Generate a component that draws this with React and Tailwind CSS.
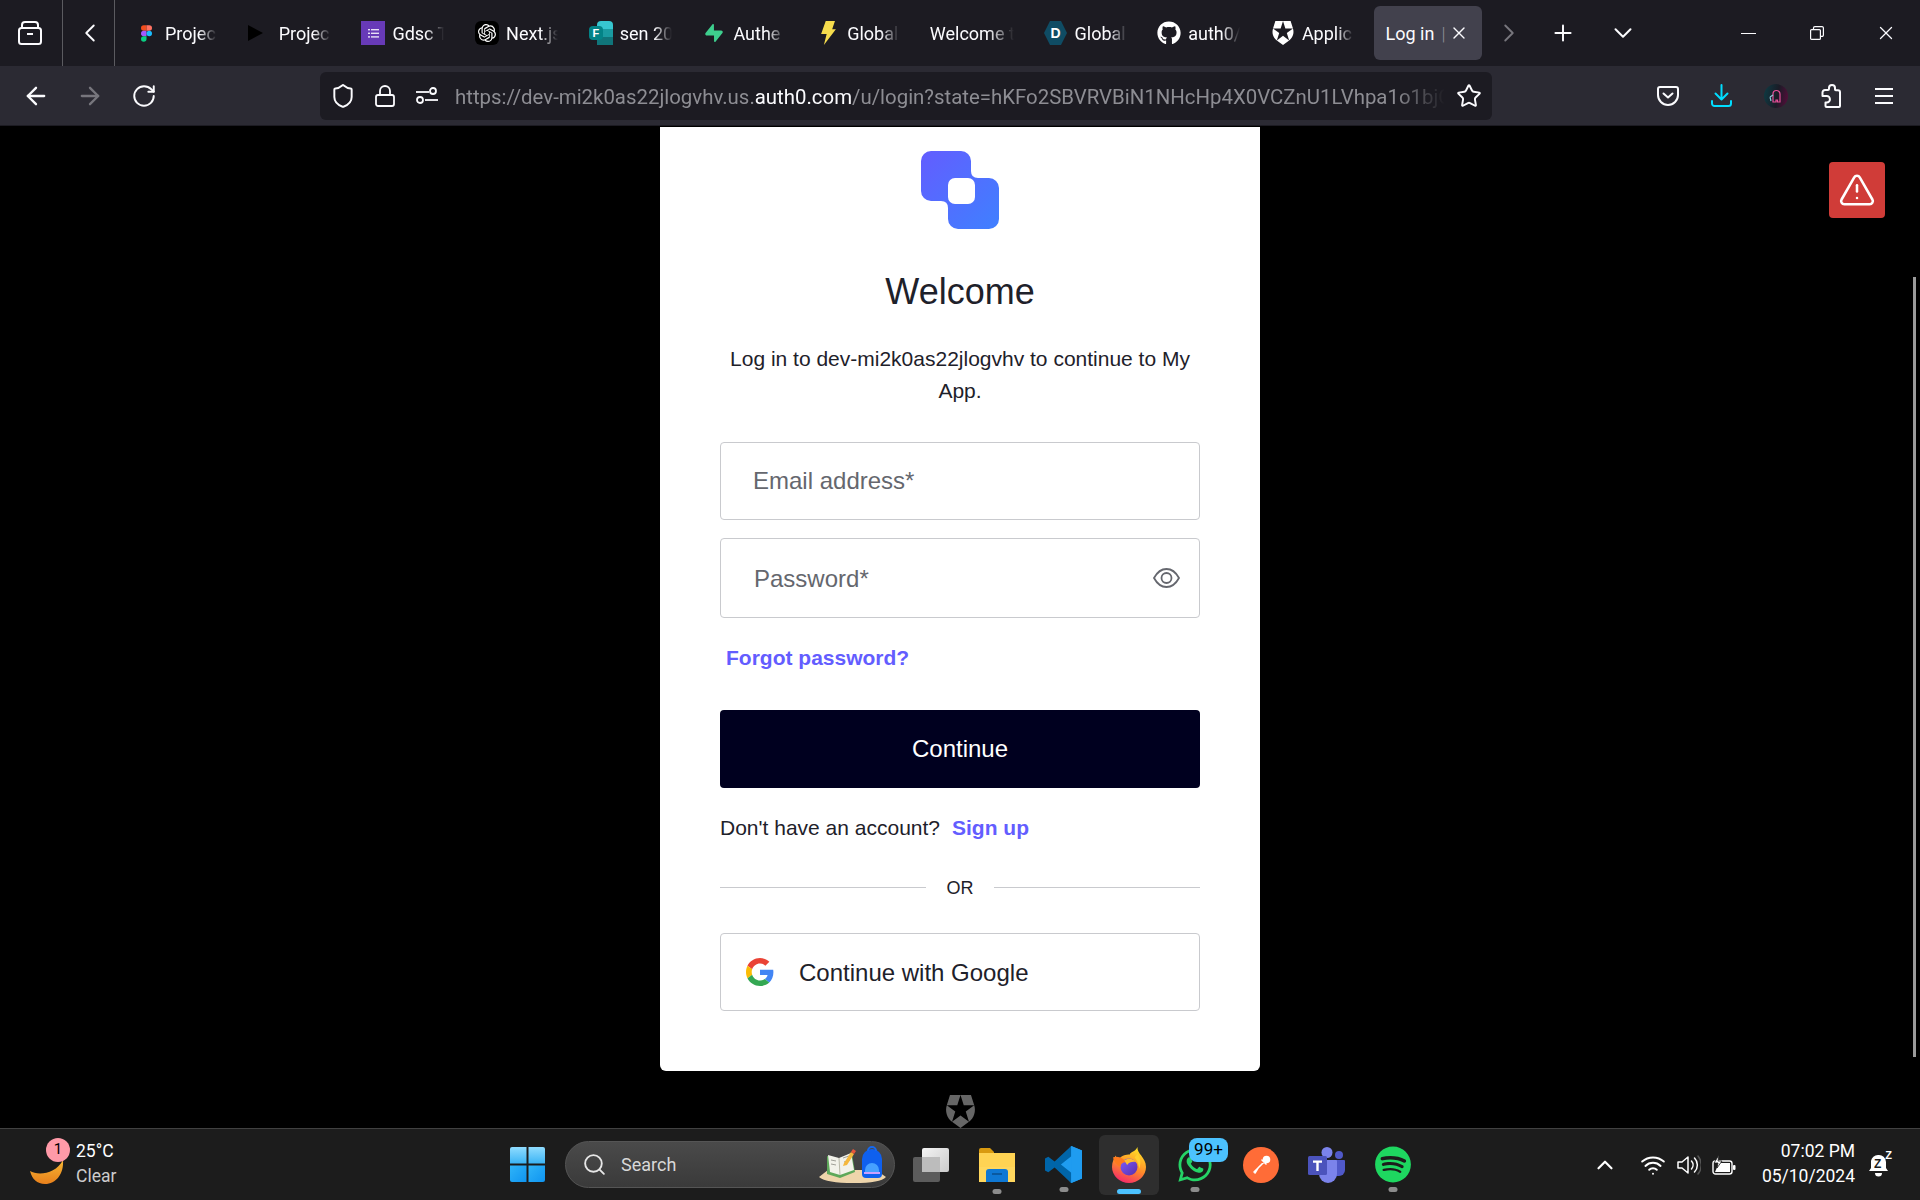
import React from "react";
import { ArrowLeft, ArrowRight, RotateCw, Shield, Lock, Star, X, Plus, ChevronDown, ChevronRight, ChevronLeft, ChevronUp, TriangleAlert, Search, Wifi } from "lucide-react";
import { FaGithub, FaWhatsapp, FaSpotify } from "react-icons/fa";
import { SiOpenai, SiAuth0, SiSupabase } from "react-icons/si";

const Figma = () => (
  <svg width="11" height="17" viewBox="0 0 14 21">
    <path d="M0 3.5A3.5 3.5 0 0 1 3.5 0H7v7H3.5A3.5 3.5 0 0 1 0 3.5z" fill="#f24e1e" />
    <path d="M7 0h3.5a3.5 3.5 0 1 1 0 7H7z" fill="#ff7262" />
    <path d="M0 10.5A3.5 3.5 0 0 1 3.5 7H7v7H3.5A3.5 3.5 0 0 1 0 10.5z" fill="#a259ff" />
    <circle cx="10.5" cy="10.5" r="3.5" fill="#1abcfe" />
    <path d="M0 17.5A3.5 3.5 0 0 1 3.5 14H7v3.5a3.5 3.5 0 1 1-7 0z" fill="#0acf83" />
  </svg>
);
const Play = () => (
  <svg className="mr-[9px]" width="15" height="16" viewBox="0 0 15 16"><path d="M0 0l15 8L0 16z" fill="#000" /></svg>
);
const FormsIcon = () => (
  <div className="w-[24px] h-[24px] bg-[#673ab7] flex items-center justify-center">
    <svg width="11" height="9" viewBox="0 0 11 9" fill="#e8e0f5">
      <rect x="0" y="0" width="2" height="1.4" /><rect x="3" y="0" width="8" height="1.4" />
      <rect x="0" y="3.6" width="2" height="1.4" /><rect x="3" y="3.6" width="8" height="1.4" />
      <rect x="0" y="7.2" width="2" height="1.4" /><rect x="3" y="7.2" width="8" height="1.4" />
    </svg>
  </div>
);
const OpenAi = () => (
  <div className="w-[24px] h-[24px] rounded-md bg-black flex items-center justify-center text-white"><SiOpenai size={18} /></div>
);
const MsForms = () => (
  <div className="relative w-[24px] h-[24px]">
    <div className="absolute right-0 top-0 w-[16px] h-[24px] bg-[#37c6d0] rounded-sm" />
    <div className="absolute right-0 top-[8px] w-[16px] h-[8px] bg-[#1a9ba1]" />
    <div className="absolute right-0 top-[16px] w-[16px] h-[8px] bg-[#10757a]" />
    <div className="absolute left-0 top-[5px] w-[14px] h-[14px] rounded-sm bg-[#038387] flex items-center justify-center text-white text-[11px] font-bold leading-none [font-family:'Liberation_Sans',sans-serif]">F</div>
  </div>
);
const YellowBolt = () => (
  <svg width="15" height="24" viewBox="0 0 16 26"><path d="M5 0h10l-3 9h4L3 26l3-12H0z" fill="#f5dc4d" /></svg>
);
const DHex = () => (
  <div className="relative w-[23px] h-[24px] flex items-center justify-center">
    <svg className="absolute inset-0" width="23" height="24" viewBox="0 0 23 24"><path d="M6 0h11l6 12-6 12H6L0 12z" fill="#0f4c64" /></svg>
    <span className="relative text-white text-[14px] font-bold leading-none [font-family:'Liberation_Sans',sans-serif]">D</span>
  </div>
);

const tabs = [
  { icon: <Figma />, label: "Projec" },
  { icon: <Play />, label: "Projec" },
  { icon: <FormsIcon />, label: "Gdsc T" },
  { icon: <OpenAi />, label: "Next.js" },
  { icon: <MsForms />, label: "sen 20" },
  { icon: <SiSupabase size={18} color="#3ecf8e" />, label: "Authe" },
  { icon: <YellowBolt />, label: "Global" },
  { label: "Welcome t" },
  { icon: <DHex />, label: "Global" },
  { icon: <FaGithub size={24} color="#fff" />, label: "auth0/" },
  { icon: <SiAuth0 size={24} color="#fff" />, label: "Applic" },
];

function Tab({ icon, label }) {
  return (
    <div className="w-[108px] h-[54px] shrink-0 flex items-center pl-[11px] text-[18px] text-[#fbfbfe]">
      {icon && <div className="w-[24px] h-[24px] shrink-0 flex items-center justify-center mr-[7px]">{icon}</div>}
      <div className={`whitespace-nowrap ${icon ? "w-[56px] [mask-image:linear-gradient(to_right,black_34px,transparent_52px)]" : "w-[88px] [mask-image:linear-gradient(to_right,black_58px,transparent_84px)]"}`}>{label}</div>
    </div>
  );
}

const ArchiveIcon = () => (
  <svg width="24" height="24" viewBox="0 0 24 24" fill="none" stroke="#fbfbfe" strokeWidth="2" strokeLinejoin="round">
    <rect x="1" y="7" width="22" height="16" rx="2.5" />
    <path d="M4 7V4a3 3 0 0 1 3-3h10a3 3 0 0 1 3 3v3" />
    <path d="M9 13h6" />
  </svg>
);
const Tune = () => (
  <svg width="22" height="20" viewBox="0 0 22 20" fill="none" stroke="#fbfbfe" strokeWidth="1.8">
    <path d="M0 6h13" /><circle cx="17" cy="5" r="3" />
    <circle cx="4" cy="14" r="3" /><path d="M9 14h13" />
  </svg>
);
const Pocket = () => (
  <svg width="22" height="20" viewBox="0 0 22 20" fill="none" stroke="#fbfbfe" strokeWidth="2" strokeLinecap="round" strokeLinejoin="round">
    <path d="M3 1h16a2 2 0 0 1 2 2v6a10 10 0 0 1-20 0V3a2 2 0 0 1 2-2z" />
    <path d="M6.5 7.5L11 11.5l4.5-4" />
  </svg>
);
const Dl = () => (
  <svg width="21" height="23" viewBox="0 0 21 23" fill="none" stroke="#00ddff" strokeWidth="2" strokeLinecap="round" strokeLinejoin="round">
    <path d="M10.5 1v14M4.5 9.5l6 6 6-6" />
    <path d="M1 17v2.5a2.5 2.5 0 0 0 2.5 2.5h14a2.5 2.5 0 0 0 2.5-2.5V17" />
  </svg>
);
const Avatar = () => (
  <div className="w-[24px] h-[24px] rounded-full bg-[linear-gradient(100deg,#0d3c44,#1a1b26_55%,#5a0c3c)] flex items-center justify-center">
    <svg width="14" height="14" viewBox="0 0 14 14" fill="none" strokeWidth="1.2">
      <path d="M4 13V5a3.5 3.5 0 0 1 7 0v8H8.5v-2H7v2z" stroke="#e84f9a" />
      <path d="M1 8l3-2M1 8l1 4" stroke="#8ec7d8" />
    </svg>
  </div>
);
const PuzzleIcon = () => (
  <svg width="20" height="24" viewBox="0 0 20 24" fill="none" stroke="#fbfbfe" strokeWidth="2" strokeLinejoin="round">
    <path d="M8 5V4a3 3 0 0 1 6 0v1.5c0 .5.3.8.8.8H17a2 2 0 0 1 2 2V22a1 1 0 0 1-1 1H5.5a1 1 0 0 1-1-1v-3.5h1.2a3 3 0 0 0 0-6.5H1.5V8.5A2.5 2.5 0 0 1 4 6h3a1 1 0 0 0 1-1z" />
  </svg>
);
const Hamburger = () => (
  <svg width="18" height="16" viewBox="0 0 18 16" stroke="#fbfbfe" strokeWidth="2"><path d="M0 1h18M0 8h18M0 15h18" /></svg>
);
const Restore = () => (
  <svg width="14" height="14" viewBox="0 0 14 14" fill="none" stroke="#fbfbfe" strokeWidth="1.2">
    <rect x="0.6" y="3.6" width="9.8" height="9.8" rx="1" />
    <path d="M3.5 3.5V2a1.4 1.4 0 0 1 1.4-1.4h7A1.4 1.4 0 0 1 13.4 2v7a1.4 1.4 0 0 1-1.4 1.4h-1.5" />
  </svg>
);

const Logo = () => (
  <svg width="78" height="78" viewBox="0 0 78 78">
    <defs>
      <linearGradient id="lg" x1="0" y1="0" x2="1" y2="1">
        <stop offset="0" stopColor="#635dff" />
        <stop offset="1" stopColor="#3f80ff" />
      </linearGradient>
    </defs>
    <path fill="url(#lg)" d="M10 0H40a10 10 0 0 1 10 10V20Q50 27 57 27H68a10 10 0 0 1 10 10V68a10 10 0 0 1-10 10H37a10 10 0 0 1-10-10V57Q27 50 20 50H10a10 10 0 0 1-10-10V10a10 10 0 0 1 10-10z" />
    <rect x="27" y="27" width="27" height="26" rx="7" fill="#fff" />
  </svg>
);
const GoogleG = () => (
  <svg width="28" height="28" viewBox="0 0 48 48">
    <path fill="#EA4335" d="M24 9.5c3.54 0 6.71 1.22 9.21 3.6l6.85-6.85C35.9 2.38 30.47 0 24 0 14.62 0 6.51 5.38 2.56 13.22l7.98 6.19C12.43 13.72 17.74 9.5 24 9.5z" />
    <path fill="#4285F4" d="M46.98 24.55c0-1.57-.15-3.09-.38-4.55H24v9.02h12.94c-.58 2.96-2.26 5.48-4.78 7.18l7.73 6c4.51-4.18 7.09-10.36 7.09-17.65z" />
    <path fill="#FBBC05" d="M10.53 28.59c-.48-1.45-.76-2.99-.76-4.59s.27-3.14.76-4.59l-7.98-6.19C.92 16.46 0 20.12 0 24c0 3.88.92 7.54 2.56 10.78l7.97-6.19z" />
    <path fill="#34A853" d="M24 48c6.48 0 11.93-2.13 15.89-5.81l-7.73-6c-2.15 1.45-4.92 2.3-8.16 2.3-6.26 0-11.57-4.22-13.47-9.91l-7.98 6.19C6.51 42.62 14.62 48 24 48z" />
  </svg>
);
const EyeIcon = () => (
  <svg width="27" height="20" viewBox="0 0 27 20" fill="none" stroke="#65676e" strokeWidth="1.8">
    <path d="M1 10C4 4.5 8.5 1 13.5 1S23 4.5 26 10c-3 5.5-7.5 9-12.5 9S4 15.5 1 10z" />
    <circle cx="13.5" cy="10" r="5" />
  </svg>
);

const Moon = () => (
  <svg width="34" height="24" viewBox="0 0 34 24">
    <defs><linearGradient id="mn" x1="0" y1="0" x2="0" y2="1"><stop offset="0" stopColor="#f7b733" /><stop offset="1" stopColor="#e8801c" /></linearGradient></defs>
    <path d="M33 0c1 14-7 24-18 24C7 24 2 19 0 11c8 5 26 3 33-11z" fill="url(#mn)" />
  </svg>
);
const WinLogo = () => (
  <svg width="35" height="35" viewBox="0 0 35 35">
    <defs>
      <linearGradient id="w1" x1="0" y1="0" x2="0" y2="1"><stop offset="0" stopColor="#8fdcff" /><stop offset="1" stopColor="#3cb4f5" /></linearGradient>
      <linearGradient id="w2" x1="0" y1="0" x2="1" y2="1"><stop offset="0" stopColor="#2fb4f8" /><stop offset="1" stopColor="#0f94f0" /></linearGradient>
    </defs>
    <path d="M2 0h14.5v16.5H0V2a2 2 0 0 1 2-2z" fill="url(#w1)" />
    <path d="M18.5 0H33a2 2 0 0 1 2 2v14.5H18.5z" fill="url(#w1)" />
    <path d="M0 18.5h16.5V35H2a2 2 0 0 1-2-2z" fill="url(#w2)" />
    <path d="M18.5 18.5H35V33a2 2 0 0 1-2 2H18.5z" fill="url(#w2)" />
  </svg>
);
const SearchArt = () => (
  <svg width="67" height="40" viewBox="0 0 67 40">
    <path d="M9 25h48l10 7c-4 4-14 6-32 6C16 38 5 36 0 32z" fill="#eed5ab" />
    <path d="M8 11l12 3 13-5 3 18-15 6-13-4z" fill="#5ea85a" />
    <path d="M9 10l11 3 12-5 3 17-14 5-10-3z" fill="#f2f2ea" />
    <path d="M20 13l1 17" stroke="#b8b8a8" strokeWidth="1" />
    <path d="M12 15l5 1M12 19l5 1M24 13l6-2M25 17l6-2" stroke="#a0a098" strokeWidth="1" />
    <path d="M25 18l7-11 3 2-7 11-4 1z" fill="#f5b83c" />
    <path d="M32 7l2-3 3 2-2 3z" fill="#e8563a" />
    <path d="M43 14a10 10 0 0 1 20 0v15a4 4 0 0 1-4 4H47a4 4 0 0 1-4-4z" fill="#0f60ee" />
    <path d="M49 6a4 4 0 0 1 8 0" stroke="#1669f0" strokeWidth="2" fill="none" />
    <path d="M46 25a7 7 0 0 1 14 0v2H46z" fill="#46a0ff" />
    <path d="M45 27h16v2H45z" fill="#c9a0ff" />
  </svg>
);
const TaskView = () => (
  <div className="relative w-[36px] h-[34px]">
    <div className="absolute left-0 bottom-0 w-[27px] h-[25px] rounded-[2px] bg-[#5c5c5c]" />
    <div className="absolute right-0 top-0 w-[27px] h-[24px] rounded-[2px] bg-[linear-gradient(135deg,#ffffff,#d4d4d4)] opacity-95" />
    <div className="absolute left-[9px] top-[9px] w-[18px] h-[15px] bg-[#bcbcbc]" />
  </div>
);
const Explorer = () => (
  <svg width="36" height="34" viewBox="0 0 36 34">
    <path d="M0 2a2 2 0 0 1 2-2h9l4 4v4H0z" fill="#d99a10" />
    <path d="M0 5h36v29H0z" fill="#ffd75e" />
    <path d="M0 5h36v14H0z" fill="#ffcf48" opacity=".5" />
    <path d="M7 24a3 3 0 0 1 3-3h16a3 3 0 0 1 3 3v10H7z" fill="#0f78d4" />
    <path d="M13 26h10" stroke="#0a4f8f" strokeWidth="1.5" />
  </svg>
);
const VsCode = () => (
  <svg width="37" height="37" viewBox="0 0 100 100">
    <path d="M71 100L31 57l40-57 29 12v76z" fill="#1f9cf0" />
    <path d="M71 0L26 42 9 29 0 34v32l9 5 17-13 45 42V72L43 50 71 28z" fill="#0065a9" />
    <path d="M71 0v100l29-12V12z" fill="#1f9cf0" />
  </svg>
);
const Firefox = () => (
  <svg width="34" height="36" viewBox="0 0 36 38">
    <defs>
      <linearGradient id="ff" x1="0.7" y1="0" x2="0.3" y2="1"><stop offset="0" stopColor="#ffe226" /><stop offset="0.55" stopColor="#ff8a2a" /><stop offset="1" stopColor="#f5266c" /></linearGradient>
      <linearGradient id="fp" x1="0" y1="0" x2="1" y2="1"><stop offset="0" stopColor="#7a5cff" /><stop offset="1" stopColor="#5b2fa8" /></linearGradient>
    </defs>
    <path d="M27 0c-1 7 9 11 9 21a18 17 0 1 1-36 0c0-5 2-9 4-12 0 3 2 4 3 5 2-5 8-6 12-6-1-2 6-3 8-8z" fill="url(#ff)" />
    <circle cx="18" cy="21" r="9" fill="url(#fp)" />
    <path d="M1 11c6-2 11 1 14 5-4 0-6 2-6 5-4-2-7-6-8-10z" fill="#ff7a1e" />
    <path d="M13 14c4-3 10-2 13 2-4-1-8 0-10 3z" fill="#ffbd2e" />
    <path d="M27 7c3 4 4 9 2 16-1-6-3-10-5-12z" fill="#ffd02e" />
  </svg>
);
const Teams = () => (
  <svg width="37" height="36" viewBox="0 0 37 36">
    <circle cx="19" cy="5.5" r="5.5" fill="#7b83eb" />
    <circle cx="31" cy="8" r="4" fill="#5059c9" />
    <path d="M25 13h11a1 1 0 0 1 1 1v9a6 6 0 0 1-6 6h-6z" fill="#5059c9" />
    <path d="M11 13h17a1 1 0 0 1 1 1v13a9 9 0 0 1-18 0z" fill="#7b83eb" />
    <rect x="0" y="9" width="19" height="19" rx="1.5" fill="#4b53bc" />
    <path d="M5 13.5h9v2.2h-3.3V24H8.3v-8.3H5z" fill="#fff" />
  </svg>
);
const Volume = () => (
  <svg width="24" height="22" viewBox="0 0 24 22" fill="none" stroke="#fff" strokeWidth="1.5" strokeLinecap="round" strokeLinejoin="round">
    <path d="M1 8v6h4l6 5V3L5 8z" />
    <path d="M14.5 7a6 6 0 0 1 0 8M17.5 4a10 10 0 0 1 0 14" />
    <path d="M21 2a14 14 0 0 1 0 18" stroke="#555" />
  </svg>
);
const Battery = () => (
  <svg width="24" height="20" viewBox="0 0 24 20" fill="none">
    <rect x="1" y="6" width="19" height="13" rx="2.5" stroke="#fff" strokeWidth="1.4" />
    <rect x="21" y="10" width="2.5" height="5" rx="1" fill="#fff" />
    <path d="M3 17l4-9h11v9z" fill="#fff" />
    <path d="M7 0L2 8h4l-1 5 5-7H6z" fill="#fff" stroke="#1c1c1c" strokeWidth="0.8" />
  </svg>
);
const Bell = () => (
  <div className="relative w-[21px] h-[24px]">
    <svg width="21" height="24" viewBox="0 0 21 24" fill="#fff">
      <path d="M9 2a7 7 0 0 1 8 7v6l2 3H0l2-3V8a7 7 0 0 1 7-6z" />
      <path d="M6 20h7a3.5 3.5 0 0 1-7 0z" />
    </svg>
    <span className="absolute left-[5px] top-[5px] text-[12px] leading-none font-bold text-[#1c1c1c] [font-family:'Liberation_Sans',sans-serif]">Z</span>
    <span className="absolute right-[-2px] top-[-3px] text-[11px] leading-none font-bold text-white [font-family:'Liberation_Sans',sans-serif]">Z</span>
  </div>
);

const Dot = () => <div className="absolute left-1/2 -translate-x-1/2 top-[41px] w-[9px] h-[5px] rounded-full bg-[#8c8c8c]" />;

const sans = "[font-family:'Liberation_Sans',Arial,sans-serif]";
const ui = "[font-family:Roboto,'Noto_Sans',sans-serif]";

export default function App() {
  return (
    <div className={`relative h-[1200px] w-full overflow-hidden flex flex-col bg-black ${ui}`}>
      {/* Tab strip */}
      <div className="h-[66px] shrink-0 bg-[#1c1b22] flex items-center">
        <div className="w-[63px] h-full shrink-0 border-r border-[#5b5b60] flex items-center pl-[18px]"><ArchiveIcon /></div>
        <div className="w-[52px] h-full shrink-0 border-r border-[#5b5b60] flex items-center justify-center"><ChevronLeft size={30} className="ml-[3px]" color="#fbfbfe" strokeWidth={1.5} /></div>
        <div className="flex items-center gap-[5.7px] pl-[8px]">
          {tabs.map((t, i) => <Tab key={i} {...t} />)}
          <div className="w-[108px] h-[54px] shrink-0 rounded-md bg-[#42414d] flex items-center pl-[12px] text-[18px] text-[#fbfbfe]">
            <span>Log in</span>
            <span className="ml-[7px] text-[#8f8f98] font-light">|</span>
            <X size={20} className="ml-[4px]" color="#fbfbfe" strokeWidth={1.6} />
          </div>
        </div>
        <ChevronRight size={30} className="ml-[12px]" color="#77767d" strokeWidth={1.5} />
        <Plus size={26} className="ml-[26px]" color="#fbfbfe" strokeWidth={1.8} />
        <ChevronDown size={30} className="ml-[32px]" color="#fbfbfe" strokeWidth={1.6} />
        <div className="flex-1" />
        <div className="w-[15px] h-px bg-[#fbfbfe]" />
        <div className="ml-[54px]"><Restore /></div>
        <X size={22} className="ml-[51px] mr-[23px]" color="#fbfbfe" strokeWidth={1.4} />
      </div>

      {/* Toolbar */}
      <div className="h-[60px] shrink-0 bg-[#2b2a33] flex items-center border-b border-[#1c1b22]">
        <ArrowLeft size={28} className="ml-[22px]" color="#fbfbfe" strokeWidth={2} />
        <ArrowRight size={28} className="ml-[26px]" color="#77767d" strokeWidth={2} />
        <RotateCw size={26} className="ml-[27px]" color="#fbfbfe" strokeWidth={1.8} />
        <div className="ml-[163px] w-[1172px] h-[48px] rounded-md bg-[#1c1b22] flex items-center">
          <Shield size={26} className="ml-[10px]" color="#fbfbfe" strokeWidth={1.8} />
          <Lock size={24} className="ml-[17px]" color="#fbfbfe" strokeWidth={1.8} />
          <div className="ml-[19px]"><Tune /></div>
          <div className="ml-[17px] w-[990px] pt-[4px] whitespace-nowrap text-[20.4px] text-[#8d8d93] [mask-image:linear-gradient(to_right,black_95%,transparent_100%)]">
            https://dev-mi2k0as22jlogvhv.us.<span className="text-[#fbfbfe]">auth0.com</span>/u/login?state=hKFo2SBVRVBiN1NHcHp4X0VCZnU1LVhpa1o1bjC
          </div>
          <Star size={26} className="ml-[11px]" color="#fbfbfe" strokeWidth={1.8} />
        </div>
        <div className="ml-[165px]"><Pocket /></div>
        <div className="ml-[32px]"><Dl /></div>
        <div className="ml-[32px]"><Avatar /></div>
        <div className="ml-[33px]"><PuzzleIcon /></div>
        <div className="ml-[34px]"><Hamburger /></div>
      </div>

      {/* Page */}
      <div className={`relative flex-1 flex flex-col items-center bg-black pt-px ${sans}`}>
        <div className="w-[600px] bg-white rounded-b-md flex flex-col items-center pt-[24px] pb-[60px]">
          <Logo />
          <h1 className="mt-[39px] text-[36px] leading-[48px] text-[#1e212a] font-normal">Welcome</h1>
          <p className="mt-[27px] w-[480px] text-center text-[21px] leading-[32px] text-[#1e212a]">Log in to dev-mi2k0as22jlogvhv to continue to My App.</p>
          <div className="mt-[35px] w-[480px] h-[78px] border border-[#c9cace] rounded-[4px] flex items-center pl-[32px] text-[24px] text-[#65676e]">Email address*</div>
          <div className="mt-[18px] w-[480px] h-[80px] border border-[#c9cace] rounded-[4px] flex items-center pl-[33px] pr-[19px] justify-between text-[24px] text-[#65676e]">
            <span className="pt-[2px]">Password*</span>
            <EyeIcon />
          </div>
          <div className="mt-[24px] w-[480px] pl-[6px] text-[21px] leading-[32px] font-bold text-[#635dff]">Forgot password?</div>
          <div className="mt-[36px] w-[480px] h-[78px] rounded-[4px] bg-[#00001f] flex items-center justify-center text-[24px] text-white">Continue</div>
          <div className="mt-[24px] w-[480px] text-[21px] leading-[32px] text-[#1e212a]">Don't have an account?<span className="ml-[12px] font-bold text-[#635dff]">Sign up</span></div>
          <div className="mt-[31px] w-[480px] flex items-center text-[18px] leading-[24px] text-[#1e212a]">
            <div className="flex-1 h-px bg-[#c9cace]" />
            <span className="w-[68px] text-center pt-px">OR</span>
            <div className="flex-1 h-px bg-[#c9cace]" />
          </div>
          <div className="mt-[33px] w-[480px] h-[78px] border border-[#c9cace] rounded-[4px] flex items-center pl-[25px] text-[24px] text-[#1e212a]">
            <GoogleG />
            <span className="ml-[25px] pt-[2px]">Continue with Google</span>
          </div>
        </div>
        <div className="mt-[24px]"><SiAuth0 size={33} color="#666666" /></div>

        <div className="absolute left-[1829px] top-[36px] w-[56px] h-[56px] rounded-[4px] bg-[#d03c38] flex items-center justify-center">
          <TriangleAlert size={38} color="#fff" strokeWidth={1.6} />
        </div>
        <div className="absolute left-[1913px] top-[151px] w-[3px] h-[780px] bg-[#9b9b9b]" />
      </div>

      {/* Taskbar */}
      <div className="h-[72px] shrink-0 bg-[#1c1c1c] border-t border-[#414141] flex items-center text-white">
        <div className="relative ml-[30px] w-[46px] h-[24px] mt-[14px]">
          <Moon />
          <div className="absolute left-[16px] top-[-22px] w-[24px] h-[24px] rounded-full bg-[#ff9aa8] flex items-center justify-center text-[15px] text-black">1</div>
        </div>
        <div className="w-[60px] text-[17.5px] leading-[25px] pb-[2px]">
          <div>25°C</div>
          <div className="text-[#cccccc]">Clear</div>
        </div>
        <div className="ml-[374px]"><WinLogo /></div>
        <div className="ml-[20px] w-[330px] h-[47px] rounded-full border border-[#555555] bg-[linear-gradient(180deg,#4a4a4a,#3a3a3a)] flex items-center relative">
          <Search size={25} className="ml-[16px]" color="#e6e6e6" strokeWidth={1.8} />
          <span className="ml-[14px] text-[18px] text-[#d8d8d8]">Search</span>
          <div className="absolute right-[8px] top-[3px]"><SearchArt /></div>
        </div>
        <div className="ml-[18px]"><TaskView /></div>
        <div className="relative ml-[30px] w-[36px] flex justify-center"><Explorer /><Dot /></div>
        <div className="relative ml-[30px] w-[37px] flex justify-center"><VsCode /><Dot /></div>
        <div className="relative ml-[17px] w-[60px] h-[60px] rounded-md bg-[#2e2e2e] flex items-center justify-center">
          <Firefox />
          <div className="absolute left-[18px] bottom-[1px] w-[24px] h-[5px] rounded-full bg-[#4cc2ff]" />
        </div>
        <div className="relative ml-[18px] w-[36px] flex justify-center">
          <FaWhatsapp size={38} color="#25d366" />
          <div className="absolute left-[12px] top-[-8px] w-[39px] h-[24px] rounded-[8px] bg-[#4cc2ff] flex items-center justify-center text-[17px] text-black">99+</div>
          <Dot />
        </div>
        <div className="ml-[30px] w-[36px] h-[36px] rounded-full bg-[#ff6c37] flex items-center justify-center">
          <svg width="22" height="22" viewBox="0 0 22 22" fill="none" stroke="#fff" strokeWidth="1.6" strokeLinecap="round"><path d="M4 18L15 7M15 7l3-3M12 6l4 4M8 14l-3 5" /><circle cx="16.5" cy="5.5" r="3" fill="#fff" /></svg>
        </div>
        <div className="ml-[29px]"><Teams /></div>
        <div className="relative ml-[30px] w-[36px] flex justify-center"><FaSpotify size={37} color="#1ed760" /><Dot /></div>
        <div className="flex-1" />
        <ChevronUp size={26} color="#fff" strokeWidth={2} />
        <Wifi size={26} className="ml-[22px]" color="#fff" strokeWidth={1.8} />
        <div className="ml-[11px]"><Volume /></div>
        <div className="ml-[11px]"><Battery /></div>
        <div className="ml-[34px] w-[85px] text-right text-[17.5px] leading-[25px] pb-[2px]">
          <div>07:02 PM</div>
          <div className="-ml-[10px] whitespace-nowrap">05/10/2024</div>
        </div>
        <div className="ml-[14px] mr-[30px]"><Bell /></div>
      </div>
    </div>
  );
}
